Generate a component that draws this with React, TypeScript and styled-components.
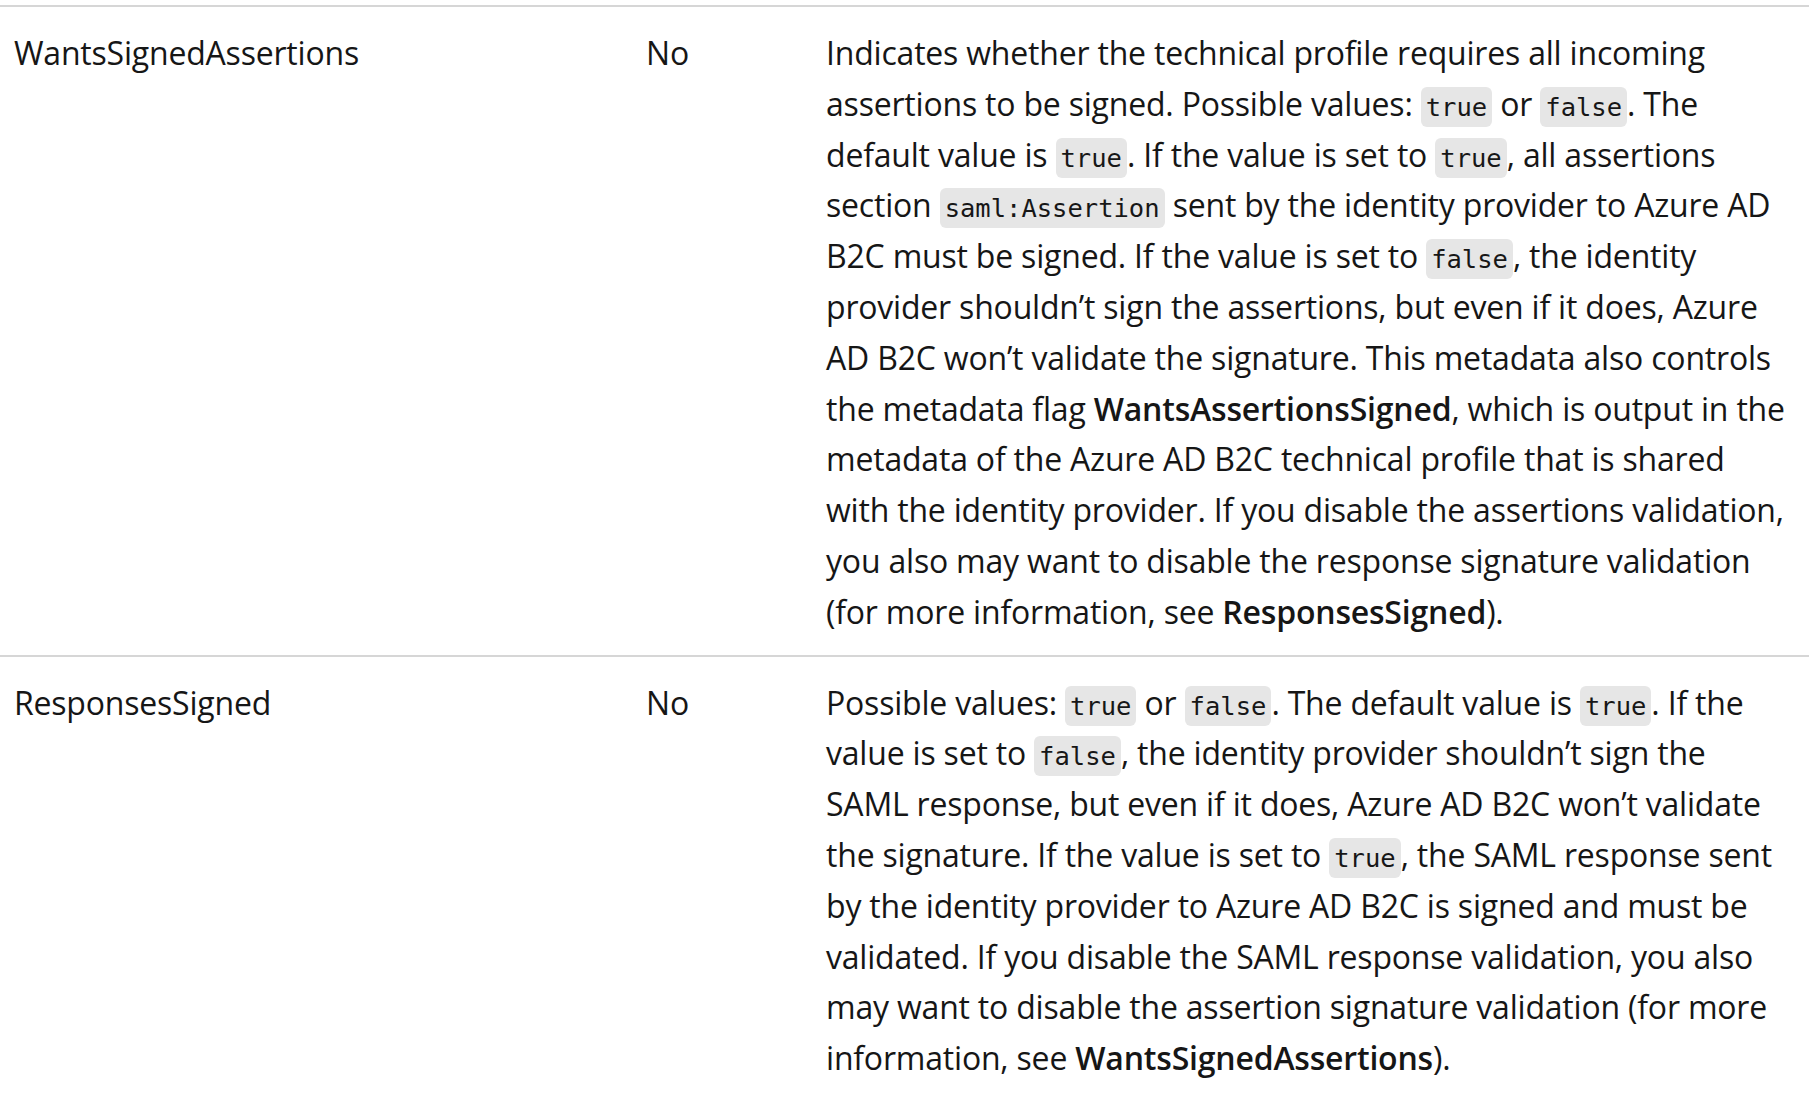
import styled, { createGlobalStyle } from 'styled-components'

const GlobalStyle = createGlobalStyle`
  body {
    margin: 0;
    background: #ffffff;
    color: #161616;
    font-family: "Open Sans", "Noto Sans", sans-serif;
  }
`

const Page = styled.div`
  padding-top: 5px;
  overflow: hidden;
`

const Table = styled.table`
  width: 1809px;
  border-collapse: collapse;
  table-layout: fixed;
  font-size: 32px;
  letter-spacing: -0.2px;
  line-height: 50.8px;
`

const Row = styled.tr`
  border-top: 2px solid #d6d6d6;
`

const Cell = styled.td`
  vertical-align: top;
  padding: 21px 16px 17px 14px;
`

const Code = styled.code`
  font-family: "DejaVu Sans Mono", "Liberation Mono", monospace;
  font-size: 25.5px;
  line-height: 1;
  letter-spacing: 0;
  color: #171717;
  background: #e6e6e6;
  border-radius: 6px;
  padding: 5px 5px;
`

const Strong = styled.strong`
  font-weight: 600;
`

const App = () => {
  return (
    <Page>
      <GlobalStyle />
      <Table>
        <colgroup>
          <col style={{ width: 632 }} />
          <col style={{ width: 180 }} />
          <col />
        </colgroup>
        <tbody>
          <Row>
            <Cell>WantsSignedAssertions</Cell>
            <Cell>No</Cell>
            <Cell>
              Indicates whether the technical profile requires all incoming assertions to be signed. Possible
              values: <Code>true</Code> or <Code>false</Code>. The default value is <Code>true</Code>. If the
              value is set to <Code>true</Code>, all assertions section <Code>saml:Assertion</Code> sent by the
              identity provider to Azure AD B2C must be signed. If the value is set to <Code>false</Code>, the
              identity provider shouldn’t sign the assertions, but even if it does, Azure AD B2C won’t validate
              the signature. This metadata also controls the metadata flag <Strong>WantsAssertionsSigned</Strong>,
              which is output in the metadata of the Azure AD B2C technical profile that is shared with the
              identity provider. If you disable the assertions validation, you also may want to disable the
              response signature validation (for more information, see <Strong>ResponsesSigned</Strong>).
            </Cell>
          </Row>
          <Row>
            <Cell>ResponsesSigned</Cell>
            <Cell>No</Cell>
            <Cell>
              Possible values: <Code>true</Code> or <Code>false</Code>. The default value is <Code>true</Code>.
              If the value is set to <Code>false</Code>, the identity provider shouldn’t sign the SAML response,
              but even if it does, Azure AD B2C won’t validate the signature. If the value is set
              to <Code>true</Code>, the SAML response sent by the identity provider to Azure AD B2C is signed and
              must be validated. If you disable the SAML response validation, you also may want to disable the
              assertion signature validation (for more information, see <Strong>WantsSignedAssertions</Strong>).
            </Cell>
          </Row>
        </tbody>
      </Table>
    </Page>
  )
}

export default App
